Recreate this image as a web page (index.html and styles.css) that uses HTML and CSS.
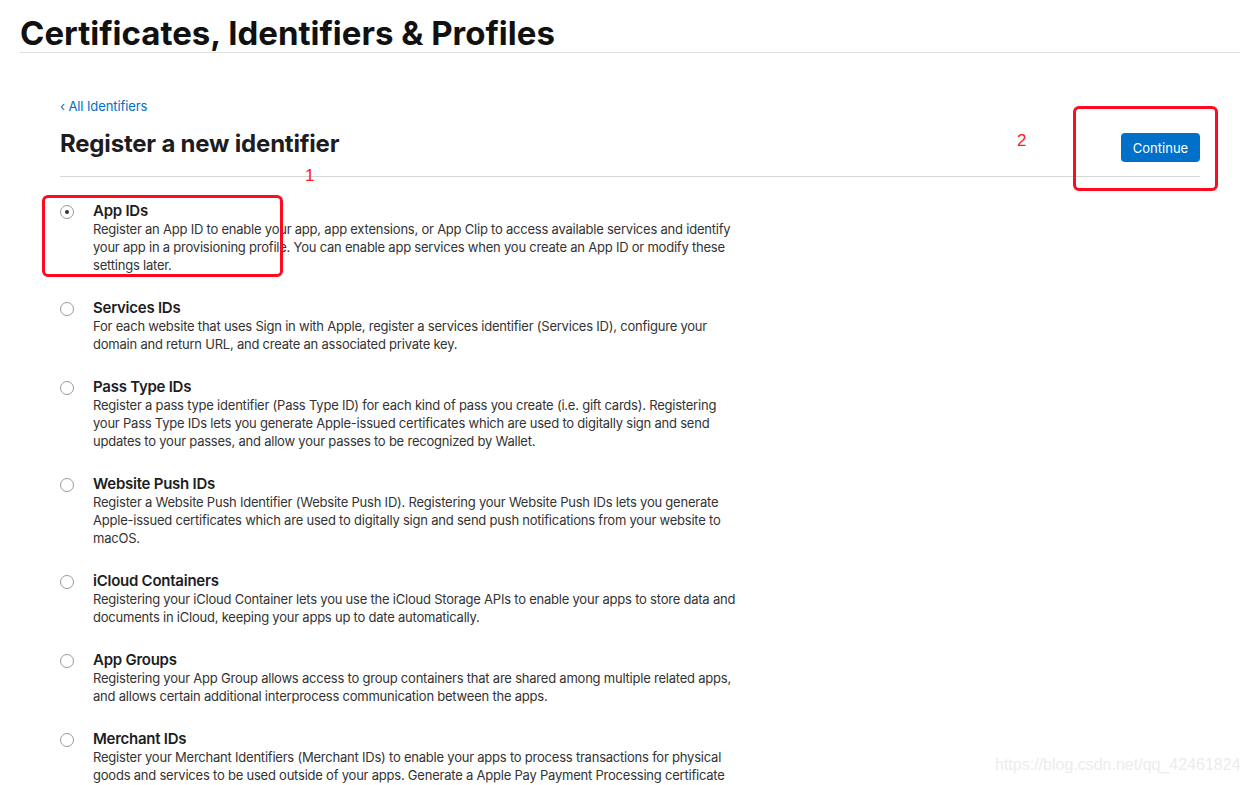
FILE: index.html
```html
<!DOCTYPE html>
<html>
<head>
<meta charset="utf-8">
<link rel="stylesheet" href="styles.css">
</head>
<body>
<header class="top">
  <h1 class="brand">Certificates, Identifiers &amp; Profiles</h1>
</header>
<main class="main">
  <a class="back" href="#">‹ All Identifiers</a>
  <div class="head">
    <h2 class="title">Register a new identifier</h2>
    <span class="mark mark-2">2</span>
    <div class="btn-wrap">
      <button class="btn">Continue</button>
      <span class="box box-2"></span>
    </div>
    <span class="mark mark-1">1</span>
  </div>
  <ul class="list">
    <li class="item">
      <span class="radio checked"></span>
      <div class="text">
        <div class="name">App IDs</div>
        <p class="desc">Register an App ID to enable your app, app extensions, or App Clip to access available services and identify your app in a provisioning profile. You can enable app services when you create an App ID or modify these settings later.</p>
      </div>
      <span class="box box-1"></span>
    </li>
    <li class="item">
      <span class="radio"></span>
      <div class="text">
        <div class="name">Services IDs</div>
        <p class="desc">For each website that uses Sign in with Apple, register a services identifier (Services ID), configure your domain and return URL, and create an associated private key.</p>
      </div>
    </li>
    <li class="item">
      <span class="radio"></span>
      <div class="text">
        <div class="name">Pass Type IDs</div>
        <p class="desc">Register a pass type identifier (Pass Type ID) for each kind of pass you create (i.e. gift cards). Registering your Pass Type IDs lets you generate Apple-issued certificates which are used to digitally sign and send updates to your passes, and allow your passes to be recognized by Wallet.</p>
      </div>
    </li>
    <li class="item">
      <span class="radio"></span>
      <div class="text">
        <div class="name">Website Push IDs</div>
        <p class="desc">Register a Website Push Identifier (Website Push ID). Registering your Website Push IDs lets you generate Apple-issued certificates which are used to digitally sign and send push notifications from your website to macOS.</p>
      </div>
    </li>
    <li class="item">
      <span class="radio"></span>
      <div class="text">
        <div class="name">iCloud Containers</div>
        <p class="desc">Registering your iCloud Container lets you use the iCloud Storage APIs to enable your apps to store data and documents in iCloud, keeping your apps up to date automatically.</p>
      </div>
    </li>
    <li class="item">
      <span class="radio"></span>
      <div class="text">
        <div class="name">App Groups</div>
        <p class="desc">Registering your App Group allows access to group containers that are shared among multiple related apps, and allows certain additional interprocess communication between the apps.</p>
      </div>
    </li>
    <li class="item">
      <span class="radio"></span>
      <div class="text">
        <div class="name">Merchant IDs</div>
        <p class="desc">Register your Merchant Identifiers (Merchant IDs) to enable your apps to process transactions for physical goods and services to be used outside of your apps. Generate a Apple Pay Payment Processing certificate for each Merchant ID.</p>
      </div>
    </li>
  </ul>
</main>
<div class="watermark">https://blog.csdn.net/qq_42461824</div>
</body>
</html>
```
FILE: styles.css
```css
html, body {
  margin: 0;
  padding: 0;
  background: #fff;
  height: 785px;
  overflow: hidden;
}
body {
  font-family: Inter, "Liberation Sans", sans-serif;
  color: #1d1d1f;
  position: relative;
}
.top {
  margin: 0 8px 0 20px;
  border-bottom: 1px solid #e0e0e0;
  padding-top: 13px;
  height: 39px;
  box-sizing: content-box;
}
.brand {
  margin: 0;
  font-size: 33px;
  line-height: 40px;
  font-weight: 700;
  color: #111;
  letter-spacing: 0;
}
.main {
  margin: 0 48px 0 60px;
  padding-top: 44px;
}
.back {
  display: block;
  font-size: 13px;
  line-height: 18px;
  color: #0070c9;
  text-decoration: none;
  letter-spacing: -0.1px;
}
.head {
  position: relative;
  display: flex;
  align-items: flex-start;
  justify-content: space-between;
  height: 53px;
  border-bottom: 1px solid #d6d6d6;
  margin-top: 8px;
}
.title {
  margin: 6px 0 0;
  font-size: 24px;
  line-height: 30px;
  font-weight: 700;
  color: #1d1d1f;
  letter-spacing: -0.2px;
}
.btn-wrap {
  position: relative;
  margin-top: 10px;
}
.btn {
  display: block;
  background: #0070c9;
  color: #fff;
  border: none;
  border-radius: 4px;
  font-family: inherit;
  font-size: 13px;
  width: 79px;
  height: 29px;
  padding: 0;
}
.mark {
  position: absolute;
  color: #ff2020;
  font-family: "Liberation Sans", sans-serif;
  font-size: 17px;
  line-height: 20px;
}
.mark-1 { left: 245px; top: 43px; }
.mark-2 { left: 957px; top: 8px; }
.box {
  position: absolute;
  border: 3px solid #ff0a1e;
  border-radius: 6px;
}
.box-2 { left: -48px; top: -27px; width: 139px; height: 79px; }
.box-1 { left: -18px; top: -7px; width: 235px; height: 76px; }
.list {
  list-style: none;
  margin: 0;
  padding: 0;
  padding-top: 25px;
}
.item {
  position: relative;
  display: flex;
  gap: 19px;
  margin-bottom: 25px;
}
.radio {
  flex: none;
  width: 12px;
  height: 12px;
  border: 1px solid #9a9a9a;
  border-radius: 50%;
  margin-top: 3px;
  box-sizing: content-box;
  position: relative;
}
.radio.checked::after {
  content: "";
  position: absolute;
  left: 4px;
  top: 4px;
  width: 4px;
  height: 4px;
  border-radius: 50%;
  background: #333;
}
.text {
  width: 648px;
}
.name {
  font-size: 15px;
  line-height: 18px;
  font-weight: 600;
  color: #1d1d1f;
  letter-spacing: -0.25px;
}
.desc {
  margin: 0;
  font-size: 13px;
  line-height: 18px;
  color: #333;
  letter-spacing: -0.22px;
}
.watermark {
  position: absolute;
  left: 995px;
  top: 756px;
  font-family: "Liberation Sans", sans-serif;
  font-size: 16px;
  color: #ececec;
}
```
